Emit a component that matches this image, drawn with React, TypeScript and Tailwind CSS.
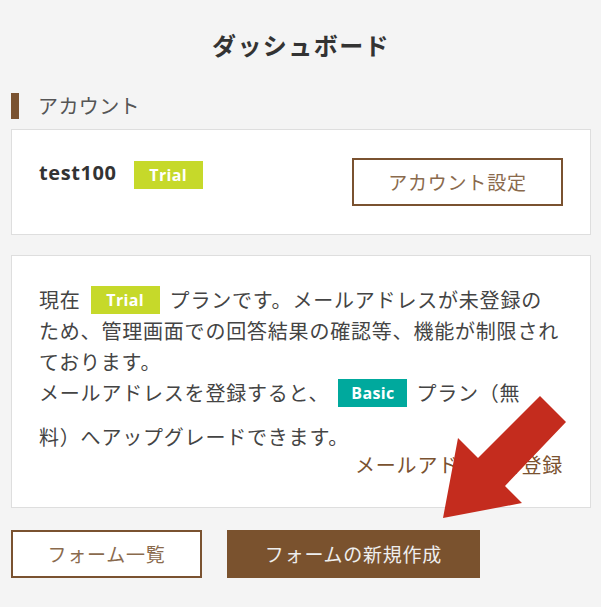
import React from 'react';

// ダッシュボード画面（モバイル幅）
// 右下の赤い矢印は注釈としてオーバーレイで描画

const FONT = { fontFamily: '"Noto Sans CJK JP", "Noto Sans", sans-serif' };
const LATIN = { fontFamily: '"Open Sans", "Noto Sans", "Noto Sans CJK JP", sans-serif' };

function PlanBadge({ label, tone }: { label: string; tone: 'trial' | 'basic' }) {
  const bg = tone === 'trial' ? 'bg-[#c6d92a]' : 'bg-[#00a99d]';
  return (
    <span
      className={`inline-block ${bg} text-white font-bold text-[16px] leading-[28px] h-[28px] w-[69px] text-center align-[2px] tracking-[0.02em]`}
      style={LATIN}
    >
      {label}
    </span>
  );
}

export default function App() {
  return (
    <div className="relative min-h-[607px] bg-[#f4f4f4] pl-[11px] pr-[10px] pt-[27px] pb-[29px]" style={FONT}>
      {/* タイトル */}
      <h1 className="text-center text-[24px] leading-[36px] font-bold text-[#333] tracking-[0.06em]">
        ダッシュボード
      </h1>

      {/* 見出し */}
      <div className="mt-[30px] flex items-center gap-[19px]">
        <span className="block w-[8px] h-[26px] bg-[#7a5230]" />
        <h2 className="text-[20px] leading-[26px] text-[#555] tracking-[0.02em]">アカウント</h2>
      </div>

      {/* アカウントカード */}
      <div className="mt-[10px] bg-white border border-[#dedede] px-[27px] py-[28px] flex justify-between items-start">
        <div className="flex items-center gap-[17px] mt-[3px]">
          <span className="text-[20px] font-bold text-[#333] leading-[28px] tracking-[0.03em] -mt-[4px]" style={LATIN}>
            test100
          </span>
          <PlanBadge label="Trial" tone="trial" />
        </div>
        <button className="h-[48px] w-[211px] border-2 border-[#7a5230] bg-white text-[#8a6a4d] text-[19px] tracking-[0.04em]">
          アカウント設定
        </button>
      </div>

      {/* プラン案内カード */}
      <div className="mt-[20px] bg-white border border-[#dedede] px-[27px] pt-[28px] pb-[29px] text-[20px] text-[#444] tracking-[0.04em]">
        <p className="leading-[31px]">
          現在<span className="mx-[10px]"><PlanBadge label="Trial" tone="trial" /></span>プランです。メールアドレスが未登録の
          <br />
          ため、管理画面での回答結果の確認等、機能が制限され
          <br />
          ております。
        </p>
        <p className="leading-[31px]">
          メールアドレスを登録すると、<span className="mx-[9px]"><PlanBadge label="Basic" tone="basic" /></span>プラン（無
        </p>
        <p className="leading-[31px] mt-[13px]">料）へアップグレードできます。</p>
        <div className="text-right leading-[26px]">
          <a className="text-[#7a5230]">メールアドレスを登録</a>
        </div>
      </div>

      {/* ボタン */}
      <div className="mt-[22px] flex gap-[25px]">
        <button className="h-[48px] w-[191px] border-2 border-[#7a5230] bg-white text-[#8a6a4d] text-[19px] tracking-[0.04em]">
          フォーム一覧
        </button>
        <button className="h-[48px] w-[253px] bg-[#7a522e] text-[#eee] text-[19px] tracking-[0.04em]">
          フォームの新規作成
        </button>
      </div>

      {/* 注釈の矢印 */}
      <svg className="absolute inset-0 pointer-events-none" width="601" height="607" viewBox="0 0 601 607">
        <polygon
          points="540,396 566,422 505,486 522,503 443,518 458,438 478,458"
          fill="#c42c1e"
        />
      </svg>
    </div>
  );
}
